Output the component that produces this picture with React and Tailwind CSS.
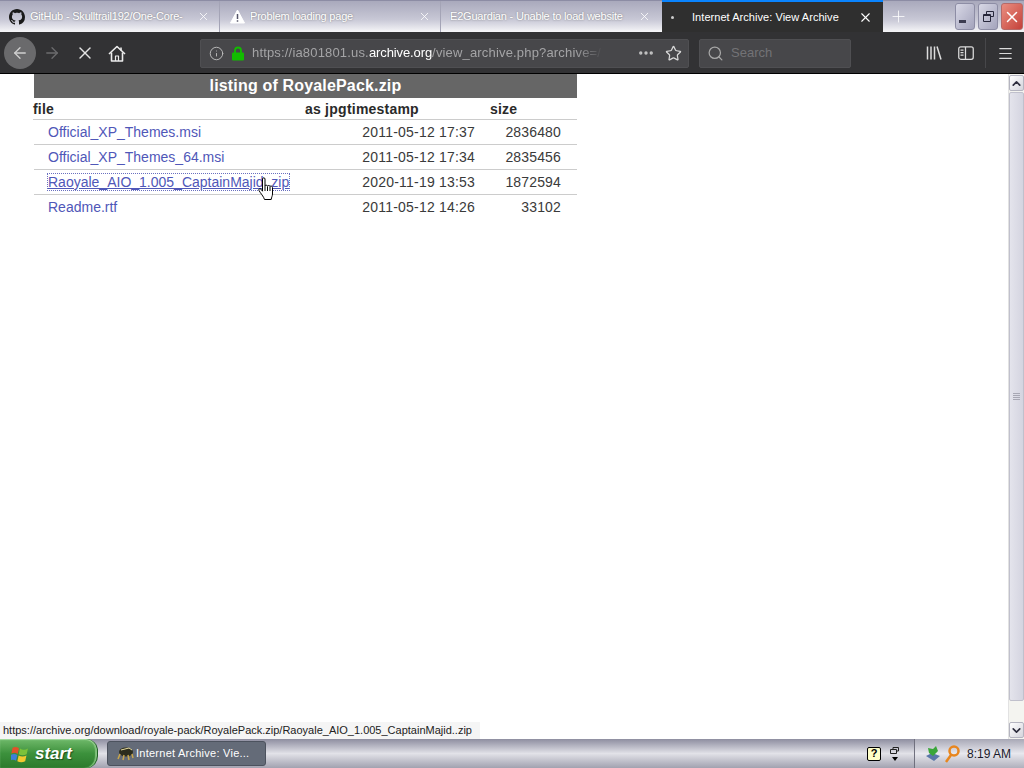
import React from 'react';
import { ArrowLeft, ArrowRight, X, Info, MoreHorizontal, Star, Search, Plus, Menu, ChevronUp, ChevronDown } from 'lucide-react';

const FILES = [
  { name: 'Official_XP_Themes.msi', date: '2011-05-12 17:37', size: '2836480' },
  { name: 'Official_XP_Themes_64.msi', date: '2011-05-12 17:34', size: '2835456' },
  { name: 'Raoyale_AIO_1.005_CaptainMajid..zip', date: '2020-11-19 13:53', size: '1872594', focus: true },
  { name: 'Readme.rtf', date: '2011-05-12 14:26', size: '33102' },
];

function GithubMark() {
  return (
    <svg width="16" height="16" viewBox="0 0 16 16" fill="#1a1a1a">
      <path d="M8 0C3.58 0 0 3.58 0 8c0 3.54 2.29 6.53 5.47 7.59.4.07.55-.17.55-.38 0-.19-.01-.82-.01-1.49-2.01.37-2.53-.49-2.69-.94-.09-.23-.48-.94-.82-1.13-.28-.15-.68-.52-.01-.53.63-.01 1.08.58 1.23.82.72 1.21 1.87.87 2.33.66.07-.52.28-.87.51-1.07-1.78-.2-3.64-.89-3.64-3.95 0-.87.31-1.59.82-2.15-.08-.2-.36-1.02.08-2.12 0 0 .67-.21 2.2.82.64-.18 1.32-.27 2-.27s1.36.09 2 .27c1.53-1.04 2.2-.82 2.2-.82.44 1.1.16 1.92.08 2.12.51.56.82 1.27.82 2.15 0 3.07-1.87 3.75-3.65 3.95.29.25.54.73.54 1.48 0 1.07-.01 1.93-.01 2.2 0 .21.15.46.55.38A8.01 8.01 0 0 0 16 8c0-4.42-3.58-8-8-8z" />
    </svg>
  );
}

function WarningMark() {
  return (
    <svg width="15" height="15" viewBox="0 0 15 15">
      <path d="M7.500 1L14.500 14H.5z" fill="#fff" stroke="#fff" strokeLinejoin="round" />
      <path d="M7.500 5v5M7.500 11.200v1.500" stroke="#55556a" strokeWidth="1.500" />
    </svg>
  );
}

function Tab({ icon, title, width }) {
  return (
    <div className={`flex items-center h-full pl-[9px] pr-[9px] border-r border-[#a4a4b6] ${width}`}>
      <span className="w-[16px] flex justify-center flex-shrink-0">{icon}</span>
      <span className="ml-[5px] mr-[12px] flex-1 text-[11px] tracking-[-0.2px] text-white whitespace-nowrap overflow-hidden [text-shadow:0_0_2px_#777]">{title}</span>
      <X size={13} strokeWidth={1.5} className="text-white flex-shrink-0" />
    </div>
  );
}

function WinButton({ className, children }) {
  return (
    <div className={`h-[27px] rounded-[3px] border border-[#8d8da5] flex items-center justify-center ${className}`}>
      {children}
    </div>
  );
}

function TitleBar() {
  return (
    <div className="h-[32px] flex flex-shrink-0 bg-gradient-to-b from-[#a9a9bc] via-[#c8c8d6] via-60% to-[#f6f6f8] border-t border-[#8c8ca4]">
      <Tab width="w-[220px]" icon={<GithubMark />} title="GitHub - Skulltrail192/One-Core-" />
      <Tab width="w-[221px]" icon={<WarningMark />} title="Problem loading page" />
      <div className="w-[221px] flex items-center h-full pl-[9px] pr-[11px]">
        <span className="mr-[12px] flex-1 text-[11px] tracking-[-0.2px] text-white whitespace-nowrap overflow-hidden [text-shadow:0_0_2px_#777]">E2Guardian - Unable to load website</span>
        <X size={13} strokeWidth={1.5} className="text-white flex-shrink-0" />
      </div>
      <div className="w-[221px] -mt-px bg-[#2f2f2f] border-t-2 border-[#0a84ff] flex items-center pl-[9px] pr-[10px] flex-shrink-0">
        <span className="w-[3px] h-[3px] rounded-full bg-[#ccc]" />
        <span className="ml-[18px] flex-1 text-[11px] tracking-[0.05px] text-white whitespace-nowrap">Internet Archive: View Archive</span>
        <X size={15} strokeWidth={1.75} className="text-white" />
      </div>
      <div className="flex-1 flex justify-between pl-[6px] pr-[1px]">
        <Plus size={19} strokeWidth={1} className="text-white mt-[6px]" />
        <div className="flex gap-[3px] -mt-px pt-[3px]">
          <WinButton className="w-[20px] bg-gradient-to-br from-[#d8d8e6] to-[#a4a4bc]">
            <span className="w-[7px] h-[3px] bg-[#3c3c50] mt-[10px] mr-[5px]" />
          </WinButton>
          <WinButton className="w-[20px] bg-gradient-to-br from-[#d8d8e6] to-[#a4a4bc]">
            <svg width="11" height="11" viewBox="0 0 11 11" fill="none" stroke="#26263a">
              <path d="M3.500 3V.5h7v5H8" />
              <path d="M.5 3.500h7v7h-7zM.5 4.500h7" />
            </svg>
          </WinButton>
          <WinButton className="w-[22px] bg-gradient-to-br from-[#e98d80] to-[#c4403a] border-[#b56a68]">
            <X size={18} strokeWidth={2} className="text-white" />
          </WinButton>
        </div>
      </div>
    </div>
  );
}

function NavBar() {
  return (
    <div className="h-[42px] pt-px flex items-center flex-shrink-0 bg-[#323234] border-b border-black">
      <div className="ml-[4px] w-[32px] h-[32px] rounded-full bg-[#6a6a6c] flex items-center justify-center">
        <ArrowLeft size={18} className="text-[#d0d0d0]" strokeWidth={1.75} />
      </div>
      <ArrowRight size={18} className="ml-[7px] text-[#6c6c6e]" strokeWidth={1.75} />
      <X size={20} className="ml-[14px] text-[#e4e4e4]" strokeWidth={1.75} />
      <svg className="ml-[13px]" width="18" height="17" viewBox="0 0 18 17" fill="none" stroke="#ececec" strokeWidth="1.600" strokeLinejoin="round">
        <path d="M1 9l8-7.500L17 9" />
        <path d="M3.500 7.500v8.500h11V7.500" />
        <path d="M7.500 16v-5h3v5" strokeWidth="1.200" />
        <path d="M13 2.500v3" />
      </svg>

      <div className="ml-[74px] w-[489px] h-[29px] bg-[#47474a] border border-[#4f4f52] rounded-[2px] flex items-center">
        <Info size={15} className="ml-[8px] text-[#bdbdbd]" strokeWidth={1.5} />
        <svg className="ml-[7px]" width="14" height="15" viewBox="0 0 14 15">
          <path d="M4 7V4.500a3 3 0 0 1 6 0V7" fill="none" stroke="#12bc00" strokeWidth="1.800" />
          <rect x="1" y="6.500" width="12" height="8" rx="1" fill="#12bc00" />
        </svg>
        <span className="ml-[7px] w-[351px] text-[13px] tracking-[0.17px] text-[#a4a4a6] whitespace-nowrap overflow-hidden [mask-image:linear-gradient(to_right,#000_92%,transparent)]">
          https://ia801801.us.<span className="text-white tracking-[-0.1px]">archive.org</span>/view_archive.php?archive=/
        </span>
        <MoreHorizontal size={18} className="ml-[34px] text-[#c4c4c4]" strokeWidth={2.5} />
        <Star size={17} className="ml-[10px] text-[#d8d8d8]" strokeWidth={1.75} />
      </div>

      <div className="ml-[10px] w-[152px] h-[29px] bg-[#47474a] border border-[#4f4f52] rounded-[2px] flex items-center">
        <Search size={17} className="ml-[7px] text-[#a8a8a8]" strokeWidth={1.75} />
        <span className="ml-[7px] text-[13px] text-[#737376]">Search</span>
      </div>

      <svg className="ml-[75px]" width="16" height="16" viewBox="0 0 16 16" fill="none" stroke="#dcdcdc" strokeWidth="1.500">
        <path d="M1.500 1.500v13M5 1.500v13M8.500 1.500v13M11 1.500l4 13" />
      </svg>
      <svg className="ml-[16px]" width="16" height="14" viewBox="0 0 16 14" fill="none" stroke="#dcdcdc" strokeWidth="1.250">
        <rect x="0.75" y="0.75" width="14.500" height="12.500" rx="2" />
        <path d="M7.500 1v12M2.500 4h3M2.500 6.500h3M2.500 9h3" />
      </svg>
      <span className="ml-[11px] w-px h-[30px] bg-[#47474a]" />
      <Menu size={17} className="ml-[11px] text-[#dcdcdc]" strokeWidth={1.75} />
    </div>
  );
}

function ListingTable() {
  return (
    <div className="w-[543px] ml-[34px] text-[14px] text-[#3a3a3a]">
      <div className="h-[24px] bg-[#666] text-white text-[16px] tracking-[0.17px] font-bold flex items-center justify-center">
        listing of RoyalePack.zip
      </div>
      <div className="h-[22px] pt-px -ml-px flex items-center font-bold tracking-[0.2px] text-[#2a2a2a] border-b border-[#ccc]">
        <span className="w-[272px]">file</span>
        <span className="w-[42px]">as jpg</span>
        <span className="w-[143px]">timestamp</span>
        <span>size</span>
      </div>
      {FILES.map((f, i) => (
        <div key={f.name} className={`h-[25px] flex items-center pl-[14px] pr-[16px] ${i < FILES.length - 1 ? 'border-b border-[#ccc]' : ''}`}>
          <span className="w-[313px]">
            <span className={`text-[#4f57b8] ${f.focus ? 'underline outline-1 outline-dotted outline-[#6a70c0]' : ''}`}>{f.name}</span>
          </span>
          <span className="w-[114px] text-right tracking-[0.2px]">{f.date}</span>
          <span className="flex-1 text-right tracking-[0.15px]">{f.size}</span>
        </div>
      ))}
    </div>
  );
}

function Scrollbar() {
  return (
    <div className="w-[16px] flex-shrink-0 flex flex-col pt-px pb-px bg-[#f4f4f0] border-l border-[#e2e2e2]">
      <div className="h-[16px] bg-gradient-to-br from-white to-[#d4d4dc] border border-[#b4b4c0] rounded-[2px] flex items-center justify-center">
        <ChevronUp size={13} strokeWidth={3} className="text-[#2c2c3c]" />
      </div>
      <div className="flex-1 mt-px bg-gradient-to-r from-[#e4e4ec] to-[#d4d4e0] border border-[#c0c0cc] rounded-[2px] flex flex-col items-center justify-center gap-px">
        <span className="w-[7px] h-px bg-[#a8a8b4]" />
        <span className="w-[7px] h-px bg-[#a8a8b4]" />
        <span className="w-[7px] h-px bg-[#a8a8b4]" />
        <span className="w-[7px] h-px bg-[#a8a8b4]" />
      </div>
      <div className="h-[21px] flex-shrink-0" />
      <div className="h-[16px] bg-gradient-to-br from-white to-[#d4d4dc] border border-[#b4b4c0] rounded-[2px] flex items-center justify-center">
        <ChevronDown size={13} strokeWidth={3} className="text-[#2c2c3c]" />
      </div>
    </div>
  );
}

function HandCursor() {
  return (
    <svg className="absolute left-[258px] top-[103px]" width="18" height="24" viewBox="0 0 18 24" fill="#fff" stroke="#000" strokeWidth="1" strokeLinejoin="round">
      <path d="M4.500 2c0-1.600 2.500-1.600 2.500 0v7c0-1 2.300-1.200 2.500.2 0-1 2.300-1 2.500.4 .2-.8 2.500-.8 2.500 1V17c0 2-1 3-1.300 5.500H6.500C6 20 2 15.500 1 13.500c-.7-1.600 1-2.500 2-1.300l1.500 2z" />
      <path d="M7 9v5M9.500 9.500v4.500M12 10v4" fill="none" />
    </svg>
  );
}

function Taskbar() {
  return (
    <div className="h-[29px] flex flex-shrink-0 bg-gradient-to-b from-[#8e8ea0] via-[#e2e2e8] to-[#a2a2b0]">
      <div className="w-[98px] rounded-r-[12px] bg-gradient-to-b from-[#6fb96a] via-[#3c913c] to-[#2c7a2c] border-r border-[#1e5e22] flex items-center pl-[11px] shadow-[inset_0_1px_1px_#a6dca0,inset_-2px_0_1px_#7fc07a]">
        <svg width="18" height="18" viewBox="0 0 17 17">
          <path d="M1.500 2.500c2-1 4-1 6 .5l-1.200 5.500C4.500 7 2.500 7 .3 8z" fill="#e2512a" />
          <path d="M8.500 3.300c2.500 1.500 4.800 1.500 7.500 0l-1.200 5.500c-2.500 1.200-5 1.200-7.500 0z" fill="#7cc23a" />
          <path d="M0 9.200c2.200-1 4-1 6 .2l-1.200 5.500c-2-1.200-4-1.200-6 0z" fill="#3f7fd8" />
          <path d="M7.200 9.800c2.500 1.300 5 1.300 7.400 0l-1.200 5.500c-2.500 1.200-5 1.200-7.400 0z" fill="#f3c92f" />
        </svg>
        <span className="ml-[6px] text-white text-[17px] font-bold italic [text-shadow:1px_1px_1px_#1c4d1c]">start</span>
      </div>
      <div className="ml-[9px] mt-[2px] w-[159px] h-[25px] rounded-[3px] bg-[#646b78] border border-[#4c525e] flex items-center pl-[9px]">
        <svg width="17" height="15" viewBox="0 0 17 15">
          <ellipse cx="9" cy="6" rx="7" ry="4.500" fill="#2c2c1c" />
          <path d="M3 8l-2 5M7 9l-1 5M11 9l1 5M15 8l1 4" stroke="#c9a64a" strokeWidth="1.500" />
          <path d="M4 4l8-2 3 2" stroke="#e8dca0" fill="none" />
        </svg>
        <span className="ml-[2px] text-[11px] text-white whitespace-nowrap tracking-[0.25px]">Internet Archive: Vie...</span>
      </div>
      <div className="flex-1 flex items-center justify-end pr-[12px]">
        <div className="w-[14px] h-[14px] bg-[#ffffc8] border border-black rounded-[2px] flex items-center justify-center text-[11px] font-bold text-black leading-none">?</div>
        <div className="ml-[9px] mr-[3px] flex flex-col items-center gap-[3px]">
          <svg width="9" height="7" viewBox="0 0 9 7" fill="none" stroke="#222">
            <path d="M3 2V.5h5.500v3.500H7M.5 2.500h6v4h-6z" />
          </svg>
          <span className="w-0 h-0 border-x-[3px] border-x-transparent border-t-[4px] border-t-black" />
        </div>
      </div>
      <div className="w-[110px] flex items-center border-l border-[#70707e] bg-gradient-to-b from-[#a8a8b6] via-[#e8e8ee] to-[#b0b0bc] pl-[10px]">
        <svg width="16" height="17" viewBox="0 0 16 17">
          <path d="M1 11l6-3 8 3-6 5z" fill="#5a76a8" />
          <path d="M3 3l5 1 3-3 2 5-5 5-4-3z" fill="#3aa63a" />
        </svg>
        <svg className="ml-[3px]" width="16" height="18" viewBox="0 0 16 18" fill="none" stroke="#e8861e" strokeWidth="2.500">
          <circle cx="10" cy="6" r="4.500" />
          <path d="M7 10l-5 7" />
        </svg>
        <span className="ml-[7px] text-[12px] text-[#1a1a2a] whitespace-nowrap">8:19 AM</span>
      </div>
    </div>
  );
}

export default function App() {
  return (
    <div className="w-[1024px] h-[768px] flex flex-col overflow-hidden bg-white font-['Liberation_Sans',Arial,sans-serif]">
      <TitleBar />
      <NavBar />
      <div className="flex-1 min-h-0 flex relative">
        <div className="flex-1">
          <ListingTable />
        </div>
        <Scrollbar />
        <HandCursor />
        {/* status panel sits over the page, as the browser draws it */}
        <div className="absolute left-0 bottom-0 h-[17px] pl-[3px] pr-[8px] bg-[#f5f5f5] text-[11px] text-[#222] flex items-center whitespace-nowrap">
          https://archive.org/download/royale-pack/RoyalePack.zip/Raoyale_AIO_1.005_CaptainMajid..zip
        </div>
      </div>
      <Taskbar />
    </div>
  );
}
